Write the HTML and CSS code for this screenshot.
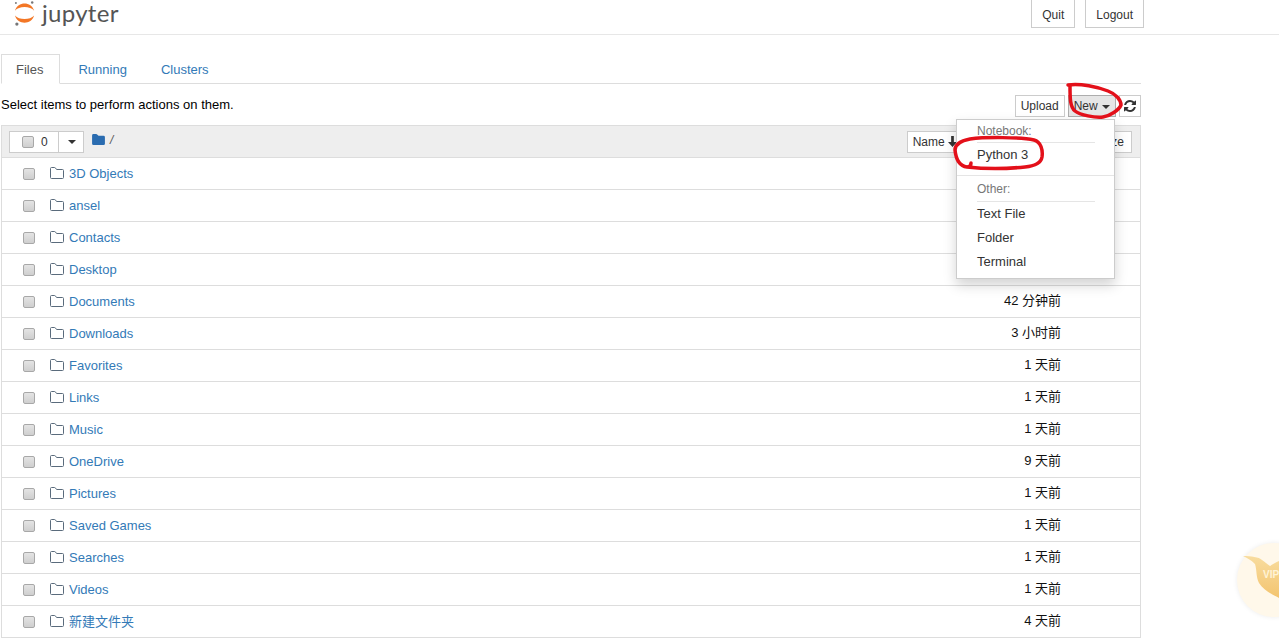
FILE: index.html
```html
<!DOCTYPE html>
<html lang="en">
<head>
    <meta charset="UTF-8">
    <title>Home</title>
    <link rel="stylesheet" href="styles.css">
</head>
<body>

<svg width="0" height="0" class="defs">
    <symbol id="folder-o" viewBox="0 0 14 12">
        <path d="M1.5 11.5h11a1 1 0 0 0 1-1V3.5a1 1 0 0 0-1-1H6.6L5.4.9A1 1 0 0 0 4.7.5H1.5a1 1 0 0 0-1 1v9a1 1 0 0 0 1 1z" fill="none" stroke="currentColor"/>
    </symbol>
    <linearGradient id="vip-fill" x1="0" y1="0" x2="0" y2="1">
        <stop offset="0" stop-color="#f8dc9e"/>
        <stop offset="1" stop-color="#f3c46f"/>
    </linearGradient>
</svg>

<header class="site-header">
    <div class="logo">
        <svg class="logo-mark" viewBox="0 0 24 28">
            <path d="M1 10C4 0 18 0 21 10C17 5 5 5 1 10z" fill="#f37726"/>
            <path d="M1 15C4 25 18 25 21 15C17 20 5 20 1 15z" fill="#f37726"/>
            <circle cx="19" cy="1.500" r="1.300" fill="#767677"/>
            <circle cx="3" cy="24" r="1.700" fill="#767677"/>
            <circle cx="2" cy="2" r="1" fill="#767677"/>
        </svg>
        <span class="logo-text">jupyter</span>
    </div>
    <div class="header-buttons">
        <button class="btn header-btn">Quit</button>
        <button class="btn header-btn">Logout</button>
    </div>
</header>

<main class="page">
    <nav class="tabs">
        <a class="tab active">Files</a>
        <a class="tab">Running</a>
        <a class="tab">Clusters</a>
    </nav>

    <div class="toolbar">
        <span class="toolbar-text">Select items to perform actions on them.</span>
        <div class="toolbar-buttons">
            <button class="btn small">Upload</button>
            <div class="new-wrap">
                <button class="btn small pressed">New <i class="caret"></i></button>
                <div class="dropdown">
                    <div class="menu-head">Notebook:</div>
                    <a class="menu-item">Python 3</a>
                    <div class="menu-divider"></div>
                    <div class="menu-head other">Other:</div>
                    <a class="menu-item">Text File</a>
                    <a class="menu-item">Folder</a>
                    <a class="menu-item">Terminal</a>
                </div>
            </div>
            <button class="btn small icon-btn">
                <svg viewBox="0 0 1536 1536" class="refresh"><path d="M1511 928q0 5-1 7-64 268-268 434.500T764 1536q-146 0-282.500-55T238 1324l-129 129q-19 19-45 19t-45-19-19-45V960q0-26 19-45t45-19h448q26 0 45 19t19 45-19 45l-137 137q71 66 161 102t187 36q134 0 250-65t186-179q11-17 53-117 8-23 30-23h192q13 0 22.500 9.500t9.500 22.500zm25-800v448q0 26-19 45t-45 19h-448q-26 0-45-19t-19-45 19-45l138-138Q969 256 768 256q-134 0-250 65T332 500q-11 17-53 117-8 23-30 23H50q-13 0-22.500-9.500T18 608v-7q65-268 270-434.500T768 0q146 0 284 55.500T1297 212l130-129q19-19 45-19t45 19 19 45z" fill="currentColor"/></svg>
            </button>
        </div>
    </div>

    <section class="file-list">
        <div class="list-head">
            <div class="select-group">
                <span class="select-count"><input type="checkbox" class="check"> 0</span>
                <span class="select-caret"><i class="caret dark"></i></span>
            </div>
            <div class="crumb">
                <svg viewBox="0 0 14 12" class="crumb-icon"><path d="M1.500 12h11a1.500 1.500 0 0 0 1.500-1.500v-7A1.500 1.500 0 0 0 12.500 2H7L5.500.5A1.500 1.500 0 0 0 4.500 0h-3A1.500 1.500 0 0 0 0 1.500v9A1.500 1.500 0 0 0 1.500 12z" fill="currentColor"/></svg>
                <span class="crumb-sep">/</span>
            </div>
            <div class="sort-buttons">
                <button class="btn sort sort-name">Name <svg viewBox="0 0 10 12" class="sort-arrow"><path d="M3.500 0h3v6.500H10L5 12 0 6.500h3.500z" fill="currentColor"/></svg></button>
                <button class="btn sort sort-size">File size</button>
            </div>
        </div>

        <div class="row"><input type="checkbox" class="check"><svg class="folder"><use href="#folder-o"/></svg><a class="name">3D Objects</a><span class="time"></span></div>
        <div class="row"><input type="checkbox" class="check"><svg class="folder"><use href="#folder-o"/></svg><a class="name">ansel</a><span class="time"></span></div>
        <div class="row"><input type="checkbox" class="check"><svg class="folder"><use href="#folder-o"/></svg><a class="name">Contacts</a><span class="time"></span></div>
        <div class="row"><input type="checkbox" class="check"><svg class="folder"><use href="#folder-o"/></svg><a class="name">Desktop</a><span class="time"></span></div>
        <div class="row"><input type="checkbox" class="check"><svg class="folder"><use href="#folder-o"/></svg><a class="name">Documents</a><span class="time">42 分钟前</span></div>
        <div class="row"><input type="checkbox" class="check"><svg class="folder"><use href="#folder-o"/></svg><a class="name">Downloads</a><span class="time">3 小时前</span></div>
        <div class="row"><input type="checkbox" class="check"><svg class="folder"><use href="#folder-o"/></svg><a class="name">Favorites</a><span class="time">1 天前</span></div>
        <div class="row"><input type="checkbox" class="check"><svg class="folder"><use href="#folder-o"/></svg><a class="name">Links</a><span class="time">1 天前</span></div>
        <div class="row"><input type="checkbox" class="check"><svg class="folder"><use href="#folder-o"/></svg><a class="name">Music</a><span class="time">1 天前</span></div>
        <div class="row"><input type="checkbox" class="check"><svg class="folder"><use href="#folder-o"/></svg><a class="name">OneDrive</a><span class="time">9 天前</span></div>
        <div class="row"><input type="checkbox" class="check"><svg class="folder"><use href="#folder-o"/></svg><a class="name">Pictures</a><span class="time">1 天前</span></div>
        <div class="row"><input type="checkbox" class="check"><svg class="folder"><use href="#folder-o"/></svg><a class="name">Saved Games</a><span class="time">1 天前</span></div>
        <div class="row"><input type="checkbox" class="check"><svg class="folder"><use href="#folder-o"/></svg><a class="name">Searches</a><span class="time">1 天前</span></div>
        <div class="row"><input type="checkbox" class="check"><svg class="folder"><use href="#folder-o"/></svg><a class="name">Videos</a><span class="time">1 天前</span></div>
        <div class="row"><input type="checkbox" class="check"><svg class="folder"><use href="#folder-o"/></svg><a class="name">新建文件夹</a><span class="time">4 天前</span></div>
    </section>
</main>

<!-- red pen marks on the screenshot -->
<svg class="marks" viewBox="0 0 1279 641">
    <path d="M1068 85C1080 83 1098 87 1108 91C1116 94 1121 100 1121 105C1119 110 1110 116 1103 117C1095 118 1080 115 1075 111C1070 107 1070 98 1070 86" />
    <path d="M971 163C971 165 970 167 967 167C960 166 956 160 955 150C955 144 960 141 970 139C985 137 1020 137 1034 140C1041 142 1043 150 1042 157C1041 163 1035 166 1025 167C1005 169 985 169 967 167" />
</svg>

<!-- floating vip badge -->
<div class="vip">
    <svg viewBox="0 0 42 74" class="vip-mark">
        <path d="M6 13C14 13 22 14 25 17C28 19 30 21 33 23C36 21 39 19 42 18V55C36 52 26 47 22 40C19 34 20 28 18 21C14 17 10 15 6 13z" fill="url(#vip-fill)"/>
    </svg>
    <span class="vip-text">VIP</span>
</div>

</body>
</html>
```

FILE: styles.css
```css
html, body {
    height: 641px;
    overflow: hidden;
}
body {
    margin: 0;
    font-family: "Liberation Sans", "Noto Sans CJK SC", sans-serif;
    font-size: 13px;
    line-height: 18px;
    color: #000;
    background-color: #fff;
    position: relative;
}
.defs {
    display: block;
    height: 0;
}
.site-header {
    height: 34px;
    display: flex;
    justify-content: space-between;
    align-items: flex-end;
    padding: 0 135px 0 14px;
    border-bottom: 1px solid #e7e7e7;
}
.logo {
    display: flex;
    align-items: flex-start;
    align-self: flex-start;
}
.logo-mark {
    width: 23px;
    height: 27px;
    margin-top: 1px;
}
.logo-text {
    margin-left: 5px;
    font-family: "Lato", sans-serif;
    font-size: 24px;
    line-height: 26px;
    letter-spacing: 0.3px;
    color: #555;
}
.header-buttons {
    display: flex;
    gap: 10px;
    padding-bottom: 6px;
}
.btn {
    font-family: inherit;
    font-size: 12px;
    line-height: 18px;
    color: #333;
    background-color: #fff;
    border: 1px solid #ccc;
    padding: 1px 5px;
    display: block;
    white-space: nowrap;
}
.header-btn {
    height: 40px;
    padding: 13px 10px 0;
}
.page {
    width: 1140px;
    margin: 19px 0 0 1px;
}
.tabs {
    display: flex;
    height: 29px;
    border-bottom: 1px solid #ddd;
}
.tab {
    padding: 6px 15px 0 14px;
    margin-right: 3px;
    color: #337ab7;
    font-size: 13px;
    border: 1px solid transparent;
    height: 22px;
}
.tab.active {
    color: #555;
    background-color: #fff;
    border-color: #ddd #ddd #fff;
    padding-right: 16px;
}
.toolbar {
    display: flex;
    justify-content: space-between;
    align-items: center;
    height: 22px;
    margin-top: 11px;
}
.toolbar-text {
    margin-top: -2px;
}
.toolbar-buttons {
    display: flex;
    gap: 3px;
}
.btn.small {
    height: 22px;
}
.pressed {
    background-color: #e6e6e6;
    border-color: #adadad;
}
.icon-btn {
    width: 22px;
    padding: 0;
    display: flex;
    align-items: center;
    justify-content: center;
}
.refresh {
    width: 12px;
    height: 12px;
}
.caret {
    display: inline-block;
    width: 0;
    height: 0;
    margin-left: 1px;
    vertical-align: middle;
    border-top: 4px solid #333;
    border-left: 4px solid transparent;
    border-right: 4px solid transparent;
}
.new-wrap {
    position: relative;
}
.dropdown {
    position: absolute;
    top: 24px;
    right: 1px;
    width: 159px;
    height: 160px;
    box-sizing: border-box;
    background-color: #fff;
    border: 1px solid #ccc;
    box-shadow: 0 6px 12px rgba(0, 0, 0, 0.175);
    font-size: 13px;
    padding-top: 2px;
    z-index: 5;
}
.menu-head {
    margin: 0 19px 0 20px;
    padding-top: 1px;
    height: 19px;
    line-height: 17px;
    font-size: 12px;
    color: #777;
    border-bottom: 1px solid #e5e5e5;
}
.menu-head.other {
    height: 20px;
}
.menu-item {
    display: block;
    padding: 3px 20px;
    line-height: 18px;
    color: #333;
}
.menu-divider {
    height: 1px;
    margin: 8px 0 4px;
    background-color: #e5e5e5;
}
.file-list {
    margin-top: 8px;
    border-left: 1px solid #ddd;
    border-right: 1px solid #ddd;
}
.list-head {
    height: 31px;
    display: flex;
    align-items: center;
    padding: 0 8px 0 7px;
    background-color: #eee;
    border-top: 1px solid #ddd;
    border-bottom: 1px solid #ddd;
    position: relative;
}
.select-group {
    display: flex;
    height: 20px;
    background-color: #fff;
    border: 1px solid #ccc;
    font-size: 12px;
    color: #333;
}
.select-count {
    display: flex;
    align-items: center;
    gap: 7px;
    width: 49px;
    padding-left: 12px;
    box-sizing: border-box;
    border-right: 1px solid #ccc;
}
.select-caret {
    width: 24px;
    display: flex;
    align-items: center;
    justify-content: center;
}
.crumb {
    display: flex;
    align-items: center;
    gap: 5px;
    margin: -4px 0 0 8px;
    color: #555;
    font-size: 12px;
}
.crumb-icon {
    width: 13px;
    height: 11px;
    color: #2a6cb0;
}
.crumb-sep {
    font-style: italic;
}
.sort-buttons {
    display: flex;
    margin-left: auto;
}
.btn.sort {
    height: 22px;
    padding: 0 5px;
}
.sort-name {
    margin-right: 111px;
}
.btn.sort-size {
    padding-right: 7px;
}
.sort-arrow {
    width: 9px;
    height: 11px;
    vertical-align: -1px;
}
.row {
    height: 32px;
    display: flex;
    align-items: center;
    padding-left: 21px;
    box-sizing: border-box;
    border-bottom: 1px solid #ddd;
    position: relative;
}
.check {
    appearance: none;
    width: 12px;
    height: 12px;
    margin: 0;
    flex: none;
    background: linear-gradient(#e4e4e4, #cfcfcf);
    border: 1px solid #a8a8a8;
    border-radius: 2px;
}
.folder {
    width: 14px;
    height: 12px;
    margin: -2px 5px 0 15px;
    color: #5a6b7c;
    flex: none;
}
.name {
    color: #337ab7;
    font-size: 13px;
}
.time {
    position: absolute;
    right: 79px;
    font-size: 13px;
    top: 6px;
    color: #111;
}
.marks {
    position: absolute;
    left: 0;
    top: 0;
    width: 1279px;
    height: 641px;
    z-index: 10;
    pointer-events: none;
    fill: none;
    stroke: #e3101a;
    stroke-width: 3.5;
    stroke-linecap: round;
}
.vip {
    position: absolute;
    left: 1237px;
    top: 543px;
    width: 74px;
    height: 74px;
    border-radius: 50%;
    background-color: #fff8ea;
    box-shadow: 0 0 5px rgba(0, 0, 0, 0.08);
}
.vip-mark {
    position: absolute;
    left: 0;
    top: 0;
    width: 42px;
    height: 74px;
}
.vip-text {
    position: absolute;
    left: 26px;
    top: 26px;
    font-size: 10px;
    line-height: 11px;
    font-weight: bold;
    color: #fff3d6;
}
```
